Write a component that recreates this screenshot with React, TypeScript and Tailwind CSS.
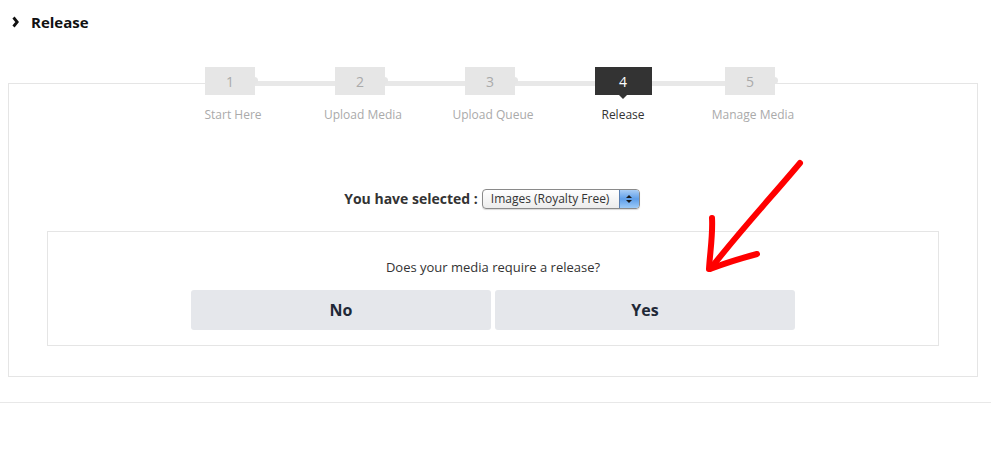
import { useState } from "react";

const steps = [
    { n: "1", label: "Start Here" },
    { n: "2", label: "Upload Media" },
    { n: "3", label: "Upload Queue" },
    { n: "4", label: "Release" },
    { n: "5", label: "Manage Media" },
];

function Stepper({ active }: { active: number }) {
    return (
        <div className="relative flex justify-center -mt-[17px]">
            <div className="absolute top-[14px] left-1/2 -translate-x-1/2 -ml-[2px] w-[490px] h-[5px] bg-[#e8e8e8]" />
            {steps.map((s, i) => {
                const isActive = i === active;
                return (
                    <div key={s.n} className="relative w-[130px] flex flex-col items-center">
                        <div
                            className={
                                isActive
                                    ? "relative w-[57px] h-[28px] bg-[#333333] text-white flex items-center justify-center text-[14px]"
                                    : "relative w-[50px] h-[28px] bg-[#e6e6e6] text-[#aaaaaa] flex items-center justify-center text-[14px] mr-[6px]"
                            }
                        >
                            {s.n}
                            {isActive ? (
                                <span className="absolute -bottom-[4px] left-1/2 -translate-x-1/2 w-0 h-0 border-l-[4px] border-r-[4px] border-t-[4px] border-l-transparent border-r-transparent border-t-[#333333]" />
                            ) : (
                                <span className="absolute top-[10px] -right-[3px] w-[7px] h-[7px] rounded-full bg-[#e6e6e6]" />
                            )}
                        </div>
                        <div
                            className={
                                "mt-[11px] text-[12px] " +
                                (isActive ? "text-[#333333]" : "text-[#aaaaaa]")
                            }
                        >
                            {s.label}
                        </div>
                    </div>
                );
            })}
        </div>
    );
}

function FakeSelect() {
    return (
        <div className="flex items-center h-[20px] w-[158px] rounded-[4px] border border-[#8a8a8a] bg-gradient-to-b from-white to-[#ececec] overflow-hidden shadow-[0_1px_1px_rgba(0,0,0,0.15)]">
            <span className="flex-1 pl-[8px] text-[12px] text-[#333333] leading-none">Images (Royalty Free)</span>
            <span className="w-[20px] h-full bg-gradient-to-b from-[#a9cdf5] via-[#5e9ee9] to-[#9ccaf7] border-l border-[#5a7fb0] flex flex-col items-center justify-center gap-[2px]">
                <span className="w-0 h-0 border-l-[3px] border-r-[3px] border-b-[3px] border-l-transparent border-r-transparent border-b-[#1a1a1a]" />
                <span className="w-0 h-0 border-l-[3px] border-r-[3px] border-t-[3px] border-l-transparent border-r-transparent border-t-[#1a1a1a]" />
            </span>
        </div>
    );
}

export default function App() {
    const [answer, setAnswer] = useState<string | null>(null);

    return (
        <div className="relative w-[991px] h-[461px] bg-white overflow-hidden font-['Open_Sans',sans-serif]">
            <div className="flex items-center h-[44px] pl-[12px]">
                <svg width="7" height="12" viewBox="0 0 7 12" className="mr-[12px]">
                    <path d="M1.5 1.5 L5.2 6 L1.5 10.5" stroke="#111" strokeWidth="2.8" fill="none" strokeLinejoin="miter" />
                </svg>
                <span className="text-[15px] font-bold text-[#111]">Release</span>
            </div>

            <div className="mt-[39px] ml-[8px] mr-[13px] h-[294px] border border-[#e5e5e5]">
                <Stepper active={3} />

                <div className="flex items-center justify-center mt-[64px] pr-[2px]">
                    <span className="text-[14px] font-bold text-[#333333] mr-[4px]">You have selected :</span>
                    <FakeSelect />
                </div>

                <div className="mt-[22px] mx-[38px] h-[115px] border border-[#e5e5e5] flex flex-col items-center">
                    <div className="mt-[26px] text-[13px] text-[#333333]">Does your media require a release?</div>
                    <div className="flex gap-[4px] mt-[12px]">
                        <button
                            onClick={() => setAnswer("no")}
                            className={
                                "w-[300px] h-[40px] rounded-[3px] text-[16px] font-bold text-[#1f2937] " +
                                (answer === "no" ? "bg-[#d5d8de]" : "bg-[#e5e7eb]")
                            }
                        >
                            No
                        </button>
                        <button
                            onClick={() => setAnswer("yes")}
                            className={
                                "w-[300px] h-[40px] rounded-[3px] text-[16px] font-bold text-[#1f2937] " +
                                (answer === "yes" ? "bg-[#d5d8de]" : "bg-[#e5e7eb]")
                            }
                        >
                            Yes
                        </button>
                    </div>
                </div>
            </div>

            <div className="mt-[25px] h-px bg-[#e8e8e8]" />

            {/* hand-drawn annotation arrow */}
            <svg className="absolute left-0 top-0 pointer-events-none" width="991" height="461">
                <g stroke="#ff0000" strokeWidth="6" strokeLinecap="round" strokeLinejoin="round" fill="none">
                    <path d="M800 163 C775 193, 745 225, 711 268" />
                    <path d="M712 218 C713 235, 710 252, 709 269" />
                    <path d="M757 254 C742 258, 725 263, 710 269" />
                </g>
            </svg>
        </div>
    );
}
